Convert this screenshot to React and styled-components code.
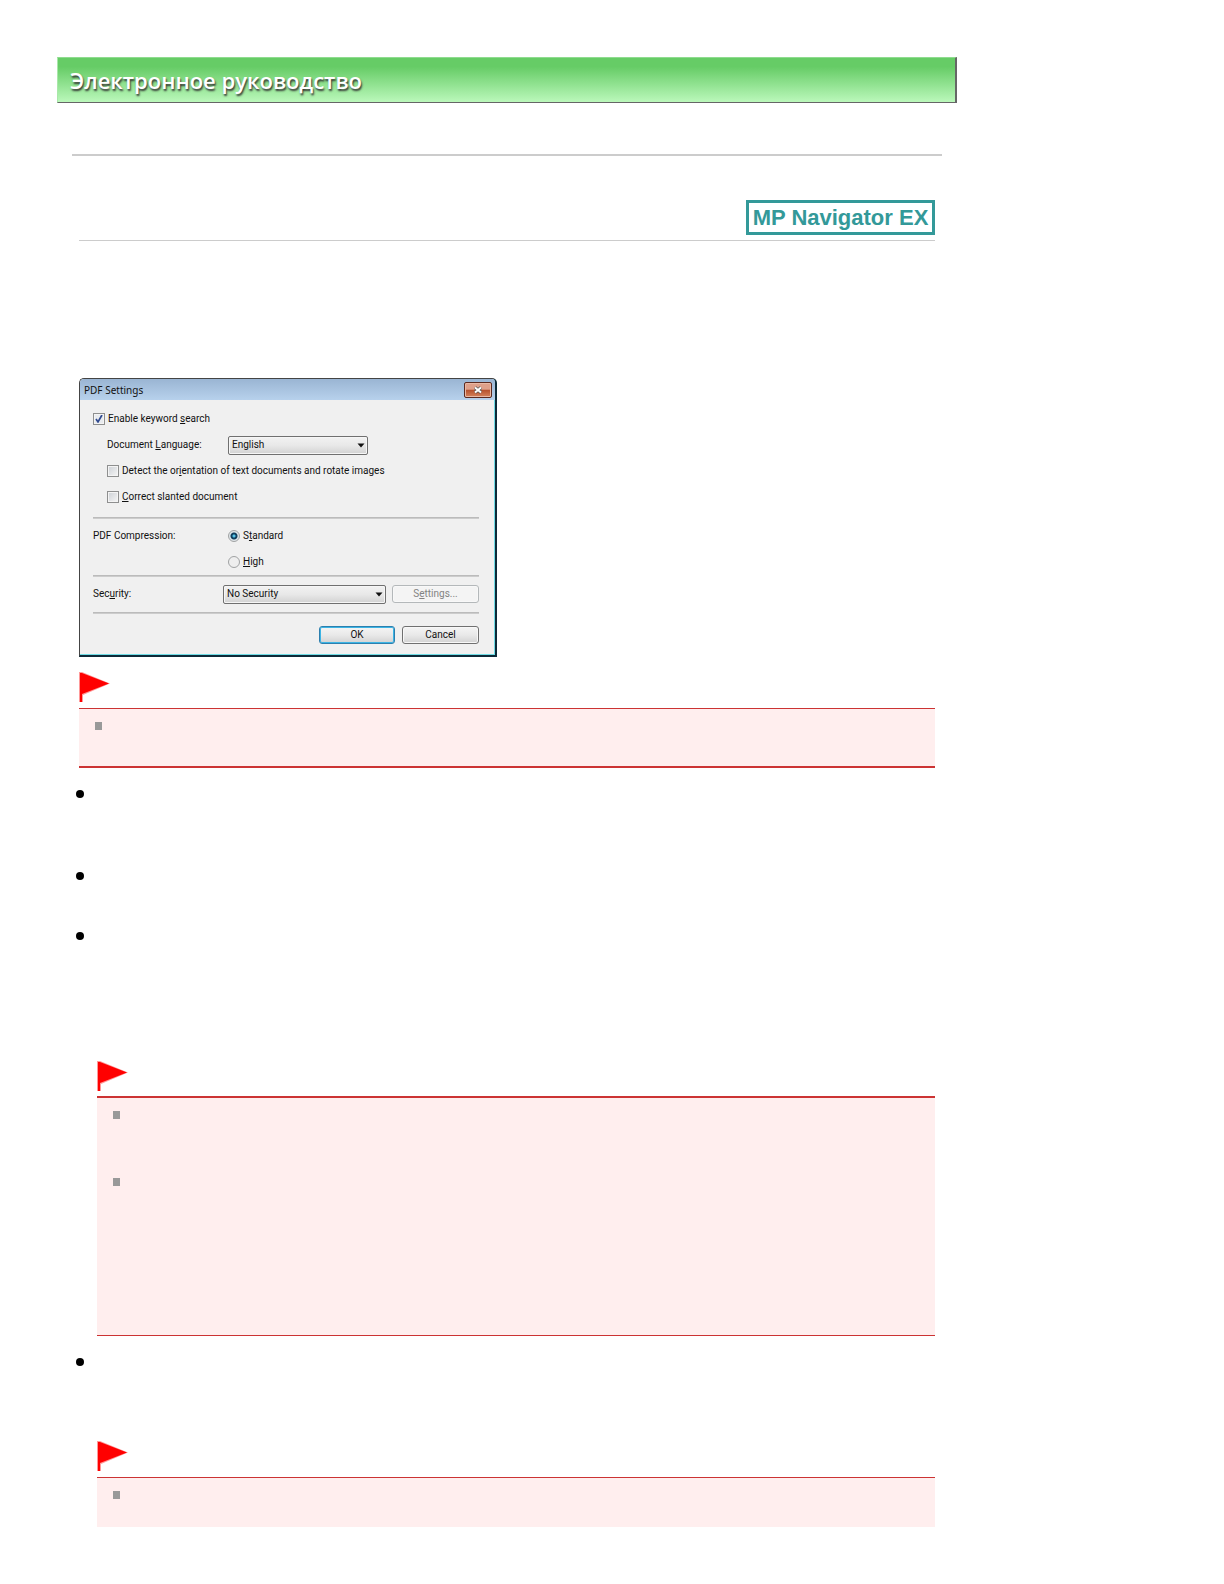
import React from "react";
import styled, { createGlobalStyle } from "styled-components";

const GlobalStyle = createGlobalStyle`
  * {
    box-sizing: border-box;
  }

  body {
    margin: 0;
    background: #fff;
    color: #000;
    font-family: "Liberation Sans", sans-serif;
  }
`;

const Page = styled.main`
  max-width: 1014px;
  padding: 57px;
`;

const Banner = styled.header`
  display: flex;
  align-items: center;
  height: 46px;
  padding-left: 12px;
  border-top: 1px solid #8fdc8f;
  border-left: 1px solid #a9e8a9;
  border-right: 2px solid #666;
  border-bottom: 1px solid #666;
  background: linear-gradient(#66cc66 20%, #bbf8bb);
`;

const BannerTitle = styled.h1`
  margin: 0;
  color: #fff;
  font: 600 22px/32px "Open Sans", "Noto Sans", sans-serif;
  text-shadow: 1px 2px 2px #333;
  white-space: nowrap;
`;

const Rule = styled.hr`
  height: 2px;
  margin: 51px 15px 44px;
  border: 0;
  background: #ccc;
`;

const Content = styled.section`
  margin: 0 22px;
`;

const Heading = styled.div`
  display: flex;
  justify-content: flex-end;
  margin-bottom: 137px;
  padding-bottom: 5px;
  border-bottom: 1px solid #ccc;
`;

const Badge = styled.strong`
  width: 189px;
  border: 3px solid #339999;
  color: #339999;
  font-size: 22px;
  line-height: 29px;
  text-align: center;
  white-space: nowrap;
`;

const Dialog = styled.form`
  max-width: 418px;
  border: 1px solid #444;
  border-right: 2px solid #0c2a38;
  border-bottom: 2px solid #0c2a38;
  border-radius: 5px 5px 0 0;
  background: #f0f0f0;
  box-shadow: inset -1px -1px #6fdbe4;
  color: #111;
  font: 10px/14px Roboto, sans-serif;
  overflow: hidden;
`;

const TitleBar = styled.div`
  display: flex;
  align-items: center;
  justify-content: space-between;
  height: 21px;
  padding: 0 3px 0 4px;
  background: linear-gradient(#9ab5d3, #b7d1ec);
`;

const TitleText = styled.span`
  font: 10px/14px "Noto Sans", sans-serif;
`;

const CloseButton = styled.button`
  display: grid;
  place-items: center;
  width: 28px;
  height: 16px;
  padding: 0;
  border: 1px solid #5c2a20;
  border-radius: 2px;
  background: linear-gradient(#dfa08a 45%, #b6502c 50%, #d4835c);
  box-shadow: inset 0 0 0 1px #e8b8a4;
`;

const DialogBody = styled.div`
  padding: 2px 16px 11px 13px;
`;

const Group = styled.div`
  padding: 4px 0 ${(p) => p.$end || 0}px;
`;

const Row = styled.div`
  display: grid;
  grid-template-columns: ${(p) => p.$columns || "1fr"};
  align-items: center;
  min-height: 26px;
  padding-left: ${(p) => p.$indent || 0}px;
`;

const Choice = styled.label`
  display: flex;
  align-items: center;
  gap: 3px;
  white-space: nowrap;
`;

const CheckBox = styled.input`
  appearance: none;
  flex: none;
  width: 12px;
  height: 12px;
  margin: 0;
  border: 1px solid #8e8f8f;
  background: linear-gradient(135deg, #ccd0d5, #f6f6f6);
  box-shadow: inset 0 0 0 1px #f4f4f4;

  &:checked {
    background: url("data:image/svg+xml,%3Csvg xmlns='http://www.w3.org/2000/svg' viewBox='0 0 10 10'%3E%3Cpath d='M2 5l2 3 4-7' fill='none' stroke='%23304a90' stroke-width='1.7'/%3E%3C/svg%3E")
      #e8ebef;
  }
`;

const Radio = styled.input`
  appearance: none;
  flex: none;
  width: 12px;
  height: 12px;
  margin: 0;
  border: 1px solid #a0a2a3;
  border-radius: 50%;
  background: #eee;

  &:checked {
    background: radial-gradient(circle, #55c4e8 0 1px, #12405e 2px 3px, #dfe5e8 4px);
  }
`;

const SelectBox = styled.span`
  display: grid;
  grid-template-columns: 1fr 14px;
  align-items: center;

  select {
    grid-area: 1 / 1 / 2 / 3;
    appearance: none;
    width: 100%;
    height: 19px;
    padding: 0 16px 0 3px;
    border: 1px solid #707070;
    border-radius: 2px;
    background: linear-gradient(#f2f2f2, #e8e8e8 50%, #d2d2d2);
    box-shadow: inset 0 0 0 1px #f6f6f6;
    color: inherit;
    font: inherit;
  }

  svg {
    grid-area: 1 / 2;
    justify-self: center;
    pointer-events: none;
  }
`;

const Divider = styled.hr`
  height: 2px;
  margin: 0;
  border: 0;
  border-top: 1px solid #bbb;
  border-bottom: 1px solid #ccc;
`;

const Button = styled.button`
  height: 18px;
  padding: 0;
  border: 1px solid ${(p) => (p.$primary ? "#2c7fae" : "#707070")};
  border-radius: 3px;
  background: linear-gradient(#f4f4f4, #e9e9e9 50%, #d2d2d2);
  box-shadow: inset 0 0 0 1px ${(p) => (p.$primary ? "#3cb4e4" : "#f8f8f8")};
  color: inherit;
  font: inherit;

  &:disabled {
    border-color: #b4b8ba;
    background: #f4f4f4;
    color: #838383;
  }
`;

const Actions = styled.div`
  display: grid;
  grid-template-columns: 76px 77px;
  justify-content: end;
  gap: 7px;
  margin-top: 12px;
`;

const NoteBlock = styled.aside`
  margin-top: ${(p) => p.$space}px;
`;

const FlagIcon = styled.svg`
  display: block;
  width: 31px;
  height: 30px;
  margin-bottom: ${(p) => p.$gap}px;
`;

const NoteList = styled.ul`
  margin: 0;
  padding: 13px 16px 0;
  border-top: ${(p) => p.$top}px solid #cc3333;
  border-bottom: ${(p) => p.$bottom}px solid #cc3333;
  background: #ffeeee;
  list-style: none;
`;

const NoteItem = styled.li`
  min-height: ${(p) => p.$height}px;

  &::before {
    content: "";
    display: block;
    width: 7px;
    height: 8px;
    background: #999;
  }
`;

const Options = styled.ul`
  display: grid;
  gap: 22px;
  margin: 22px 22px 0 19px;
  padding: 0;
  list-style: none;
`;

const Option = styled.li`
  display: grid;
  grid-template-columns: 8px 1fr;
  gap: 13px;
  min-height: ${(p) => p.$height || 0}px;

  &::before {
    content: "";
    width: 8px;
    height: 8px;
    border-radius: 50%;
    background: #000;
  }
`;

function Note({ space, gap = 6, top = 1, bottom = 0, items }) {
  return (
    <NoteBlock $space={space}>
      <FlagIcon $gap={gap} viewBox="0 0 31 30" aria-hidden="true">
        <path d="M0 0h3l28 11.500L4 23V30H0z" fill="#f99" />
        <path d="M1 1h2l27 10.500L3 22v8H1z" fill="#f00" />
      </FlagIcon>
      <NoteList $top={top} $bottom={bottom}>
        {items.map((height, i) => (
          <NoteItem key={i} $height={height} />
        ))}
      </NoteList>
    </NoteBlock>
  );
}

function Select({ id, value }) {
  return (
    <SelectBox>
      <select id={id} defaultValue={value}>
        <option>{value}</option>
      </select>
      <svg width="8" height="5" viewBox="0 0 8 5" aria-hidden="true">
        <path d="M0.500 0.500h7L4 4.500z" fill="#111" />
      </svg>
    </SelectBox>
  );
}

function PdfSettings() {
  return (
    <Dialog onSubmit={(e) => e.preventDefault()}>
      <TitleBar>
        <TitleText>PDF Settings</TitleText>
        <CloseButton type="button" aria-label="Close">
          <svg width="10" height="8" viewBox="0 0 10 8">
            <path d="M2 1.500l6 5M8 1.500l-6 5" stroke="#555" strokeWidth="3.500" />
            <path d="M2 1.500l6 5M8 1.500l-6 5" stroke="#fff" strokeWidth="2" />
          </svg>
        </CloseButton>
      </TitleBar>
      <DialogBody>
        {/* keyword search */}
        <Group $end={7}>
          <Row>
            <Choice>
              <CheckBox type="checkbox" defaultChecked />
              <span>
                Enable keyword <u>s</u>earch
              </span>
            </Choice>
          </Row>
          <Row $columns="121px 140px" $indent={14}>
            <label htmlFor="language">
              Document <u>L</u>anguage:
            </label>
            <Select id="language" value="English" />
          </Row>
          <Row $indent={14}>
            <Choice>
              <CheckBox type="checkbox" />
              <span>
                Detect the or<u>i</u>entation of text documents and rotate images
              </span>
            </Choice>
          </Row>
          <Row $indent={14}>
            <Choice>
              <CheckBox type="checkbox" />
              <span>
                <u>C</u>orrect slanted document
              </span>
            </Choice>
          </Row>
        </Group>
        <Divider />
        {/* compression */}
        <Group>
          <Row $columns="135px 1fr">
            <span>PDF Compression:</span>
            <Choice>
              <Radio type="radio" name="compression" defaultChecked />
              <span>
                S<u>t</u>andard
              </span>
            </Choice>
          </Row>
          <Row $indent={135}>
            <Choice>
              <Radio type="radio" name="compression" />
              <span>
                <u>H</u>igh
              </span>
            </Choice>
          </Row>
        </Group>
        <Divider />
        {/* security */}
        <Group $end={5}>
          <Row $columns="130px 163px 6px 1fr">
            <label htmlFor="security">
              Sec<u>u</u>rity:
            </label>
            <Select id="security" value="No Security" />
            <span />
            <Button type="button" disabled>
              S<u>e</u>ttings...
            </Button>
          </Row>
        </Group>
        <Divider />
        <Actions>
          <Button type="submit" $primary>
            OK
          </Button>
          <Button type="button">Cancel</Button>
        </Actions>
      </DialogBody>
    </Dialog>
  );
}

function App() {
  return (
    <Page>
      <GlobalStyle />
      <Banner>
        <BannerTitle>Электронное руководство</BannerTitle>
      </Banner>
      <Rule />
      <Content>
        <Heading>
          <Badge>MP Navigator EX</Badge>
        </Heading>
        <PdfSettings />
        <Note space={15} bottom={2} items={[44]} />
      </Content>
      <Options>
        <Option $height={60} />
        <Option $height={38} />
        <Option>
          <Note space={129} gap={5} top={2} bottom={1} items={[67, 157]} />
        </Option>
        <Option>
          <Note space={83} items={[36]} />
        </Option>
      </Options>
    </Page>
  );
}

export default App;
